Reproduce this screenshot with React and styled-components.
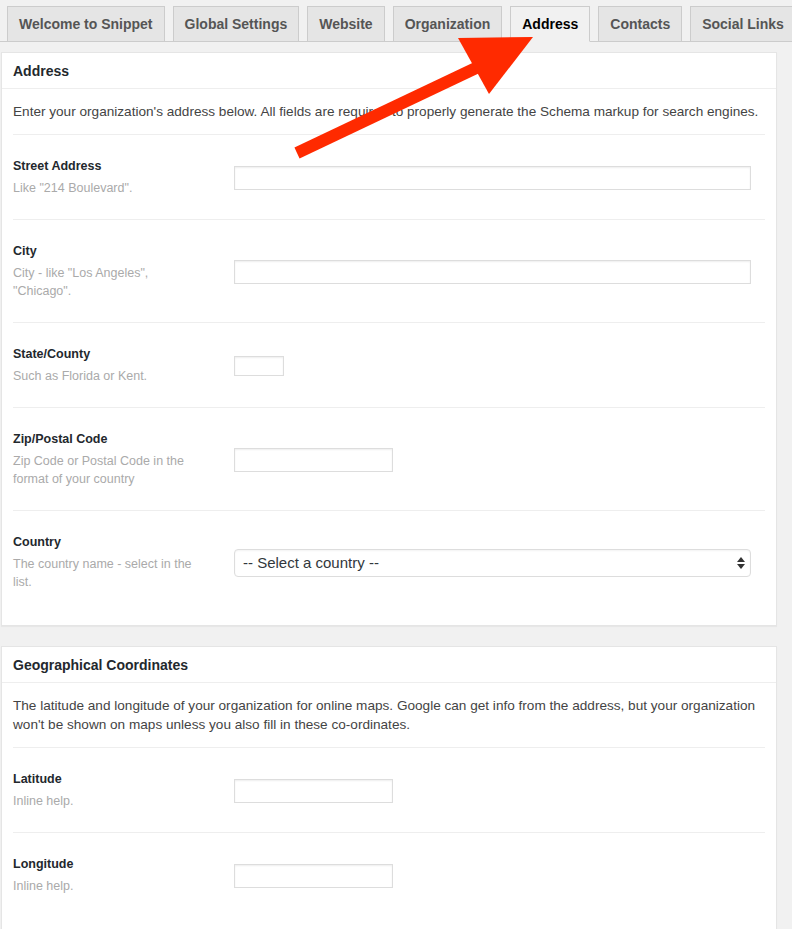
import React from "react";
import styled, {createGlobalStyle} from "styled-components";

const GlobalStyle = createGlobalStyle`
  html, body {
    margin: 0;
    padding: 0;
    background: #f1f1f1;
  }
  body {
    font-family: "Liberation Sans", Arial, Helvetica, sans-serif;
    color: #444;
  }
`;

const Page = styled.div`
  position: relative;
  width: 792px;
  min-height: 960px;
  overflow: hidden;
`;

const TabBar = styled.nav`
  display: flex;
  gap: 8px;
  padding: 6px 0 0 7px;
  border-bottom: 1px solid #ccc;
  white-space: nowrap;
`;

const Tab = styled.a`
  display: block;
  flex-shrink: 0;
  padding: 5px 11px;
  font-size: 14px;
  font-weight: 700;
  line-height: 24px;
  color: ${(props) => (props.active ? "#000" : "#555")};
  background: ${(props) => (props.active ? "#f1f1f1" : "#e5e5e5")};
  border: 1px solid #ccc;
  border-bottom: ${(props) => (props.active ? "1px solid #f1f1f1" : "none")};
  margin-bottom: ${(props) => (props.active ? "-1px" : "0")};
  text-decoration: none;
`;

const Panel = styled.section`
  margin: ${(props) => props.top}px 15px 0 1px;
  background: #fff;
  border: 1px solid #e5e5e5;
  box-shadow: 0 1px 1px rgba(0, 0, 0, 0.04);
  padding-bottom: ${(props) => props.bottom}px;
`;

const PanelTitle = styled.h2`
  margin: 0;
  padding: 9px 11px 7px;
  font-size: 14px;
  font-weight: 700;
  line-height: 19px;
  color: #23282d;
  border-bottom: 1px solid #eee;
`;

const Intro = styled.p`
  margin: 13px 11px;
  font-size: 13.6px;
  line-height: 19px;
  color: #444;
`;

const Row = styled.div`
  display: grid;
  grid-template-columns: 190px 1fr;
  column-gap: 31px;
  align-items: center;
  margin: 0 11px;
  padding: 23px 0 22px;
  border-top: 1px solid #eee;
`;

const LabelCell = styled.div`
  display: flex;
  flex-direction: column;
  gap: 5px;
`;

const Label = styled.label`
  font-size: 12.5px;
  font-weight: 700;
  line-height: 16px;
  color: #23282d;
`;

const Help = styled.span`
  font-size: 12.5px;
  line-height: 18px;
  color: #aaa;
`;

const TextInput = styled.input`
  box-sizing: border-box;
  width: ${(props) => props.w}px;
  height: ${(props) => props.h || 24}px;
  margin: 0;
  padding: 2px 6px;
  border: 1px solid #ddd;
  border-radius: 0;
  background: #fff;
  box-shadow: inset 0 1px 2px rgba(0, 0, 0, 0.07);
  font-family: inherit;
  font-size: 14px;
  outline: none;
`;

const SelectWrap = styled.div`
  position: relative;
  width: 517px;
`;

const Select = styled.select`
  appearance: none;
  -webkit-appearance: none;
  box-sizing: border-box;
  width: 100%;
  height: 28px;
  margin: 0;
  padding: 0 24px 0 8px;
  border: 1px solid #ddd;
  border-radius: 4px;
  background: #fff;
  box-shadow: inset 0 1px 2px rgba(0, 0, 0, 0.05);
  font-family: inherit;
  font-size: 15px;
  color: #32373c;
  outline: none;
`;

const SelectArrows = styled.svg`
  position: absolute;
  right: 6px;
  top: 8px;
  pointer-events: none;
`;

const Overlay = styled.svg`
  position: absolute;
  left: 0;
  top: 0;
  pointer-events: none;
`;

const tabs = [
    "Welcome to Snippet",
    "Global Settings",
    "Website",
    "Organization",
    "Address",
    "Contacts",
    "Social Links",
];

const Field = ({label, help, children}) => (
    <Row>
        <LabelCell>
            <Label>{label}</Label>
            <Help>{help}</Help>
        </LabelCell>
        <div>{children}</div>
    </Row>
);

const App = () => {
    return (
        <Page>
            <GlobalStyle/>
            <TabBar>
                {tabs.map((t) => (
                    <Tab key={t} active={t === "Address"}>{t}</Tab>
                ))}
            </TabBar>

            <Panel top={10} bottom={12}>
                <PanelTitle>Address</PanelTitle>
                <Intro>
                    Enter your organization's address below. All fields are required to properly generate the Schema markup for search engines.
                </Intro>
                <Field label="Street Address" help={'Like "214 Boulevard".'}>
                    <TextInput w={517}/>
                </Field>
                <Field label="City" help={'City - like "Los Angeles", "Chicago".'}>
                    <TextInput w={517}/>
                </Field>
                <Field label="State/County" help="Such as Florida or Kent.">
                    <TextInput w={50} h={20}/>
                </Field>
                <Field label="Zip/Postal Code" help="Zip Code or Postal Code in the format of your country">
                    <TextInput w={159}/>
                </Field>
                <Field label="Country" help="The country name - select in the list.">
                    <SelectWrap>
                        <Select defaultValue="">
                            <option value="">-- Select a country --</option>
                        </Select>
                        <SelectArrows width="8" height="12" viewBox="0 0 8 12">
                            <path d="M4 0 L8 5 L0 5 Z" fill="#333"/>
                            <path d="M4 12 L8 7 L0 7 Z" fill="#333"/>
                        </SelectArrows>
                    </SelectWrap>
                </Field>
            </Panel>

            <Panel top={20} bottom={40}>
                <PanelTitle>Geographical Coordinates</PanelTitle>
                <Intro>
                    The latitude and longitude of your organization for online maps. Google can get info from the address, but your organization won't be shown on maps unless you also fill in these co-ordinates.
                </Intro>
                <Field label="Latitude" help="Inline help.">
                    <TextInput w={159}/>
                </Field>
                <Field label="Longitude" help="Inline help.">
                    <TextInput w={159}/>
                </Field>
            </Panel>

            <Overlay width="792" height="200" viewBox="0 0 792 200">
                <line x1="297" y1="153" x2="476" y2="68" stroke="#ff2a00" strokeWidth="12"/>
                <polygon points="533,37 458,38 489,94" fill="#ff2a00"/>
            </Overlay>
        </Page>
    );
};

export default App;
